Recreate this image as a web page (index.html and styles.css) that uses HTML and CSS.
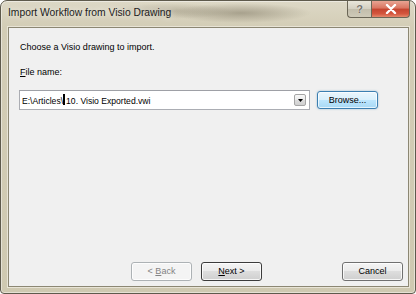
FILE: index.html
```html
<!DOCTYPE html>
<html>
<head>
<meta charset="utf-8">
<link rel="stylesheet" href="styles.css">
</head>
<body>
<div class="window">
  <div class="titlebar">
    <span class="title">Import Workflow from Visio Drawing</span>
    <div class="caption-btns">
      <div class="cap help">?</div>
      <div class="cap close">
        <svg width="12" height="10" viewBox="0 0 12 10"><path d="M2 1 L10 9 M10 1 L2 9" stroke="#fff" stroke-width="2.4" stroke-linecap="round"/></svg>
      </div>
    </div>
  </div>
  <div class="client">
    <div class="content">
      <p class="intro">Choose a Visio drawing to import.</p>
      <p class="label"><u>F</u>ile name:</p>
      <div class="row">
        <div class="combo">
          <span class="value">E:\Articles\<span class="caret"></span>10. Visio Exported.vwi</span>
          <div class="dd"><svg width="5" height="3" viewBox="0 0 5 3"><path d="M0 0 H5 L2.5 3 Z" fill="#000"/></svg></div>
        </div>
        <div class="btn browse"><span>Browse...</span></div>
      </div>
    </div>
    <div class="footer">
      <div class="nav">
        <div class="btn disabled"><span>&lt; <u>B</u>ack</span></div>
        <div class="btn default"><span><u>N</u>ext &gt;</span></div>
      </div>
      <div class="btn"><span>Cancel</span></div>
    </div>
  </div>
</div>
</body>
</html>
```

FILE: styles.css
```css
* { box-sizing: border-box; }
html, body { margin: 0; padding: 0; background: #ffffff; }
body { font-family: "Liberation Sans", Arial, sans-serif; }

.window {
  width: 416px;
  height: 294px;
  border: 1px solid #5e5a4c;
  border-radius: 7px 7px 4px 4px;
  background:
    radial-gradient(ellipse 70px 10px at 240px 12px, rgba(120,112,92,0.5), rgba(120,112,92,0) 100%),
    radial-gradient(ellipse 60px 8px at 170px 10px, rgba(140,132,110,0.4), rgba(140,132,110,0) 100%),
    linear-gradient(to bottom, #ddd8c6 0px, #d3cdb6 26px, #cfc9b1 100%);
  padding: 0 6px 6px 7px;
  display: flex;
  flex-direction: column;
  box-shadow: inset 0 0 0 1px rgba(255,255,255,0.45);
}

.titlebar {
  height: 26px;
  display: flex;
  justify-content: space-between;
  align-items: flex-start;
}
.title {
  font-size: 10.3px;
  color: #1c1c1c;
  margin-top: 6px;
  text-shadow: 0 0 6px rgba(255,255,255,0.9);
}
.caption-btns {
  display: flex;
  margin-right: -1px;
}
.cap {
  height: 17px;
  border: 1px solid #6b6656;
  border-top: none;
  display: flex;
  align-items: center;
  justify-content: center;
}
.help {
  width: 24px;
  border-radius: 0 0 0 4px;
  border-right: none;
  background: linear-gradient(to bottom, #e9e6da 0%, #d3cfc0 50%, #c2bdab 51%, #cfcab8 100%);
  color: #76736b;
  font-size: 11px;
  font-weight: bold;
  text-shadow: 0 0 1px #fff;
}
.close {
  width: 39px;
  border-radius: 0 0 4px 0;
  background: linear-gradient(to bottom, #e8a493 0%, #d97460 45%, #c4442f 50%, #d4563e 80%, #e58a6c 100%);
}

.client {
  flex: 1;
  background: #f0f0f0;
  border: 1px solid #8c8773;
  box-shadow: 0 0 0 1px #e8e4d6;
  display: flex;
  flex-direction: column;
  justify-content: space-between;
  font-size: 9px;
  color: #000;
}
.content {
  padding: 14px 0 0 10px;
}
.intro {
  margin: 0 0 0 1px;
  line-height: 11px;
}
.label {
  margin: 14px 0 0 1px;
  line-height: 11px;
}
.row {
  display: flex;
  align-items: center;
  margin-top: 12px;
}
.combo {
  width: 291px;
  height: 20px;
  background: #fff;
  border: 1px solid #abadb3;
  border-top-color: #9ea0a6;
  display: flex;
  align-items: center;
  justify-content: space-between;
  padding: 0 3px 0 2px;
}
.value {
  white-space: nowrap;
  font-size: 8.6px;
}
.caret {
  position: relative;
  display: inline-block;
  width: 3px;
  height: 9px;
}
.caret::after {
  content: "";
  position: absolute;
  left: 0;
  top: -1px;
  width: 2px;
  height: 11px;
  background: #000;
}
.dd {
  width: 12px;
  height: 12px;
  border: 1px solid #a5a5a5;
  border-radius: 2px;
  background: linear-gradient(to bottom, #f7f7f7 0%, #ebebeb 50%, #dcdcdc 51%, #d0d0d0 100%);
  display: flex;
  align-items: center;
  justify-content: center;
}

.btn {
  width: 61px;
  height: 19px;
  border: 1px solid #707070;
  border-radius: 3px;
  background: linear-gradient(to bottom, #f4f4f4 0%, #ebebeb 48%, #dddddd 50%, #cfcfcf 100%);
  box-shadow: inset 0 0 0 1px rgba(255,255,255,0.8);
  display: flex;
  align-items: center;
  justify-content: center;
  font-size: 9px;
  line-height: 11px;
  color: #000;
  white-space: pre;
}
.browse {
  margin-left: 7px;
  height: 18px;
  border-color: #3c7fb1;
  background: linear-gradient(to bottom, #eaf6fd 0%, #d9f0fc 48%, #bee6fd 50%, #a7d9f5 100%);
  box-shadow: inset 0 0 0 1px rgba(255,255,255,0.7), 0 0 2px rgba(60,127,177,0.5);
}
.disabled {
  border-color: #adb2b5;
  background: #f4f4f4;
  color: #838383;
}
.default {
  border-color: #3c3c3c;
}

.footer {
  display: flex;
  justify-content: space-between;
  padding: 0 5px 5px 122px;
}
.nav {
  display: flex;
  gap: 9px;
}
```
